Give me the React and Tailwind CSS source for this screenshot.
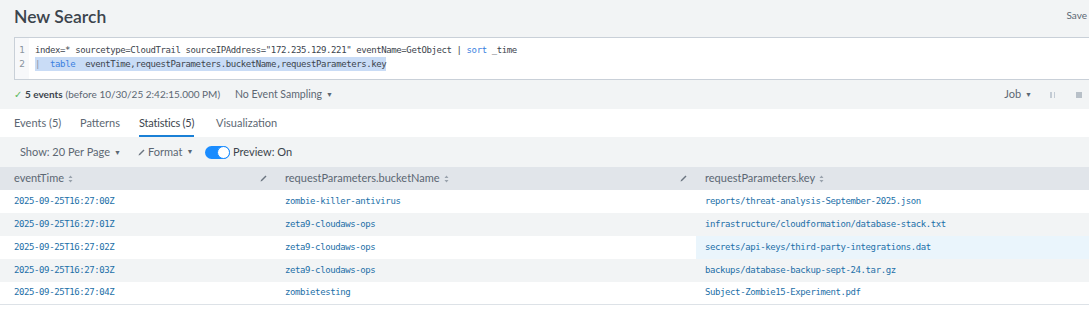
import React from "react";

const rows = [
  ["2025-09-25T16:27:00Z", "zombie-killer-antivirus", "reports/threat-analysis-September-2025.json"],
  ["2025-09-25T16:27:01Z", "zeta9-cloudaws-ops", "infrastructure/cloudformation/database-stack.txt"],
  ["2025-09-25T16:27:02Z", "zeta9-cloudaws-ops", "secrets/api-keys/third-party-integrations.dat"],
  ["2025-09-25T16:27:03Z", "zeta9-cloudaws-ops", "backups/database-backup-sept-24.tar.gz"],
  ["2025-09-25T16:27:04Z", "zombietesting", "Subject-Zombie15-Experiment.pdf"],
];

const mono = "font-['DejaVu_Sans_Mono',monospace] text-[9px] tracking-[-0.4px]";

function Caret() {
  return <span className="inline-block ml-[4px] text-[7px] align-middle relative top-[-1px]">▼</span>;
}

function Pencil({ className = "" }) {
  return (
    <svg width="7" height="7" viewBox="0 0 7 7" className={className}>
      <path d="M0.5 6.5 L1 5 L5.5 0.5 L6.5 1.5 L2 6 Z" fill="#6b7580" />
    </svg>
  );
}

function Sort() {
  return (
    <svg width="5" height="8" viewBox="0 0 5 8" className="inline-block ml-[4px]">
      <path d="M2.5 0.5 L4.5 3 L0.5 3 Z M2.5 7.5 L4.5 5 L0.5 5 Z" fill="#9aa3ad" />
    </svg>
  );
}

export default function App() {
  return (
    <div className="w-[1089px] h-[333px] overflow-hidden bg-white font-['Lato',sans-serif] text-[#3c444d]">
      <div className="bg-[#f2f4f5]">
        {/* header */}
        <div className="h-[37px] flex items-start">
          <div className="pl-[14px] pt-[5px] text-[17.5px] font-semibold leading-[24px] text-[#3c444d]">New Search</div>
          <div className="ml-auto pr-[2px] whitespace-nowrap pt-[8px] text-[10px] text-[#5c6773]">Save</div>
        </div>
        {/* search box */}
        <div className="ml-[14px] h-[43px] bg-white border-t border-b border-l border-[#c9d0d8] flex">
          <div className="w-[14px] bg-[#f7f8fa] pt-[5px] text-[9px] leading-[14px] text-[#8a949e] flex flex-col items-center font-['DejaVu_Sans',sans-serif]">
            <span>1</span>
            <span>2</span>
          </div>
          <div className={`pl-[6px] pt-[5px] leading-[14px] text-[#3c444d] whitespace-pre ${mono}`}>
            <div>
              index=* sourcetype=CloudTrail sourceIPAddress="172.235.129.221" eventName=GetObject | <span className="text-[#3a7fe0]">sort</span> _time
            </div>
            <div>
              <span className="bg-[#c9dcf6] py-[2px]">
                <span className="text-[#8a949e]">|</span>  <span className="text-[#3a7fe0]">table</span>  eventTime,requestParameters.bucketName,requestParameters.key
              </span>
            </div>
          </div>
        </div>
        {/* status row */}
        <div className="h-[29px] flex items-center text-[10px] whitespace-nowrap">
          <div className="pl-[14px] flex items-center w-[235px] shrink-0">
            <span className="text-[#5cb85c] text-[10px] mr-[3px]">✓</span>
            <span className="font-bold text-[#3c444d]">5 events</span>
            <span className="ml-[3px] text-[#5c6773]">(before 10/30/25 2:42:15.000 PM)</span>
          </div>
          <div className="text-[#5c6773] text-[10.5px]">
            No Event Sampling<Caret />
          </div>
          <div className="ml-auto flex items-center text-[#5c6773] text-[11px]">
            <span>Job<Caret /></span>
            <span className="ml-[18px] flex gap-[2px]">
              <span className="w-[1.5px] h-[6px] bg-[#c3cbd4]" />
              <span className="w-[1.5px] h-[6px] bg-[#c3cbd4]" />
            </span>
            <span className="ml-[21px] mr-[7px] w-[6px] h-[6px] bg-[#b8c0c8]" />
          </div>
        </div>
      </div>
      {/* tabs */}
      <div className="h-[28px] bg-white flex items-stretch text-[11px] text-[#5c6773] whitespace-nowrap">
        <div className="ml-[14px] w-[66px] flex items-center">Events (5)</div>
        <div className="w-[59px] flex items-center">Patterns</div>
        <div className="w-[77px] flex">
          <div className="flex items-center border-b-2 border-[#1a80d6] text-[#3c444d] pt-[2px] tracking-[-0.2px]">Statistics (5)</div>
        </div>
        <div className="flex items-center">Visualization</div>
      </div>
      {/* toolbar */}
      <div className="h-[30px] bg-[#f2f4f5] flex items-center text-[11px] text-[#5c6773] whitespace-nowrap">
        <div className="ml-[20px] w-[118px]">Show: 20 Per Page<Caret /></div>
        <div className="w-[67px] flex items-center">
          <Pencil className="mr-[3px]" />
          Format<Caret />
        </div>
        <div className="w-[25px] h-[13px] rounded-full bg-[#1a8cff] relative">
          <span className="absolute right-0 top-0 w-[13px] h-[13px] rounded-full bg-white border border-[#1a8cff]" />
        </div>
        <div className="ml-[3px] text-[#3c444d]">Preview: On</div>
      </div>
      {/* table */}
      <div className="text-[11px]">
        <div className="h-[23px] bg-[#e1e5ea] flex items-center text-[#5c6773]">
          <div className="w-[276px] pl-[14px] pr-[9px] flex items-center">
            <span>eventTime</span><Sort />
            <Pencil className="ml-auto" />
          </div>
          <div className="w-[420px] pl-[9px] pr-[9px] flex items-center">
            <span>requestParameters.bucketName</span><Sort />
            <Pencil className="ml-auto" />
          </div>
          <div className="flex-1 pl-[9px] flex items-center">
            <span>requestParameters.key</span><Sort />
          </div>
        </div>
        {rows.map((r, i) => (
          <div
            key={i}
            className={`h-[23px] flex items-stretch text-[#1c6fa8] ${mono} ${i % 2 === 1 ? "bg-[#f2f4f5]" : "bg-white"} ${i === 4 ? "border-b border-[#dde2e7]" : ""}`}
          >
            <div className="w-[276px] pl-[14px] flex items-center">{r[0]}</div>
            <div className="w-[420px] pl-[9px] flex items-center">{r[1]}</div>
            <div className={`flex-1 pl-[9px] flex items-center ${i === 2 ? "bg-[#eaf5fc]" : ""}`}>{r[2]}</div>
          </div>
        ))}
      </div>
    </div>
  );
}
